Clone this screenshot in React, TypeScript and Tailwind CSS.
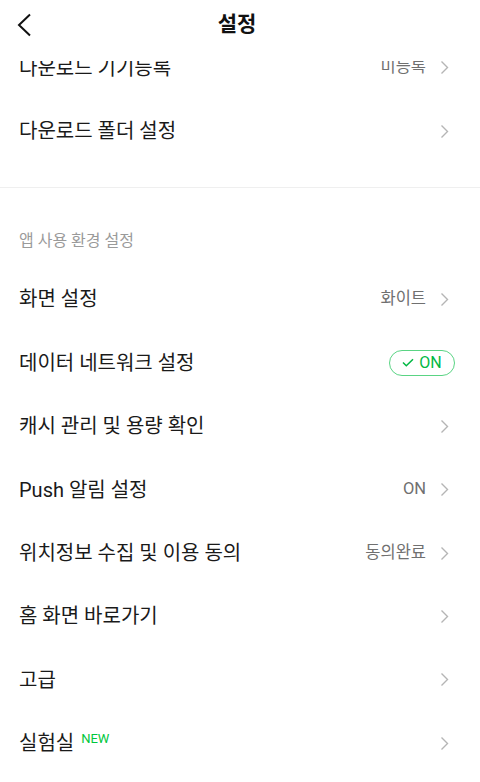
import React from "react";

const font = { fontFamily: 'Roboto, "Noto Sans CJK KR", sans-serif' };

function Chevron() {
  return (
    <svg width="9" height="15" viewBox="0 0 9 15" fill="none" className="shrink-0">
      <path d="M1.5 1.5L7.5 7.5L1.5 13.5" stroke="#b5b5b5" strokeWidth="1.4" />
    </svg>
  );
}

function Row({ title, value, badge, isNew }: { title: string; value?: string; badge?: boolean; isNew?: boolean }) {
  return (
    <div className="h-[63.4px] flex items-center pl-[19px] pr-[31px]">
      <div className="flex-1 flex items-start">
        <span className="text-[20px] text-[#1a1a1a] leading-none">{title}</span>
        {isNew && <span className="ml-[7px] -mt-[1px] text-[13px] leading-none text-[#00c73c]">NEW</span>}
      </div>
      {value && <span className="text-[16.5px] text-[#707070] mr-[14px]">{value}</span>}
      {badge ? (
        <div className="-mr-[6px] w-[66px] h-[26px] rounded-full border border-[#5ad484] flex items-center justify-center gap-[5px] text-[#00b843]">
          <svg width="12" height="9" viewBox="0 0 12 9" fill="none">
            <path d="M1 4.5L4.3 7.8L11 1.2" stroke="#00b843" strokeWidth="1.5" />
          </svg>
          <span className="text-[16px] leading-none">ON</span>
        </div>
      ) : (
        <Chevron />
      )}
    </div>
  );
}

export default function App() {
  return (
    <div className="w-[480px] h-[782px] bg-white overflow-hidden" style={font}>
      <div className="relative z-10 h-[61px] bg-white pb-[11px] flex items-center">
        <div className="pl-[17px]">
          <svg width="16" height="24" viewBox="0 0 16 24" fill="none">
            <path d="M13 1.5L2 12L13 22.5" stroke="#111" strokeWidth="2" />
          </svg>
        </div>
        <div className="absolute left-0 right-0 top-0 h-[50px] flex items-center justify-center pointer-events-none">
          <span className="text-[21px] font-bold text-[#111] ml-[-6px]">설정</span>
        </div>
      </div>
      <div className="-mt-[25px]">
        <Row title="다운로드 기기등록" value="미등록" />
        <Row title="다운로드 폴더 설정" />
        <div className="h-[24px]" />
        <div className="h-px bg-[#efefef]" />
        <div className="pl-[19px] pt-[41px] pb-[15px]">
          <span className="block text-[16px] leading-[24px] text-[#9a9a9a]">앱 사용 환경 설정</span>
        </div>
        <Row title="화면 설정" value="화이트" />
        <Row title="데이터 네트워크 설정" badge />
        <Row title="캐시 관리 및 용량 확인" />
        <Row title="Push 알림 설정" value="ON" />
        <Row title="위치정보 수집 및 이용 동의" value="동의완료" />
        <Row title="홈 화면 바로가기" />
        <Row title="고급" />
        <Row title="실험실" isNew />
      </div>
    </div>
  );
}
